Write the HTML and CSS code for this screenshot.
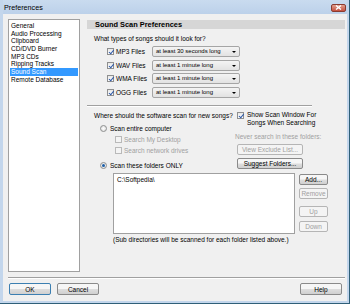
FILE: index.html
```html
<!DOCTYPE html>
<html>
<head>
    <title>Preferences</title>
    <link rel="stylesheet" href="styles.css">
</head>
<body>
    <div class="window">
        <div class="titlebar">
            <span class="title">Preferences</span>
            <div class="close">
                <svg width="7" height="5" viewBox="0 0 7 5"><path d="M1 0.5 L6 4.5 M6 0.5 L1 4.5" stroke="#fff" stroke-width="1.4"/></svg>
            </div>
        </div>
        <div class="dialog">
            <div class="main">
                <ul class="pages">
                    <li>General</li>
                    <li>Audio Processing</li>
                    <li>Clipboard</li>
                    <li>CD/DVD Burner</li>
                    <li>MP3 CDs</li>
                    <li>Ripping Tracks</li>
                    <li class="selected">Sound Scan</li>
                    <li>Remote Database</li>
                </ul>
                <div class="panel">
                    <div class="header">Sound Scan Preferences</div>
                    <div class="question">What types of songs should it look for?</div>
                    <div class="types">
                        <div class="type-row">
                            <label class="check"><span class="box on"></span>MP3 Files</label>
                            <div class="dropdown">at least 30 seconds long<span class="arrow"></span></div>
                        </div>
                        <div class="type-row">
                            <label class="check"><span class="box on"></span>WAV Files</label>
                            <div class="dropdown">at least 1 minute long<span class="arrow"></span></div>
                        </div>
                        <div class="type-row">
                            <label class="check"><span class="box on"></span>WMA Files</label>
                            <div class="dropdown">at least 1 minute long<span class="arrow"></span></div>
                        </div>
                        <div class="type-row">
                            <label class="check"><span class="box on"></span>OGG Files</label>
                            <div class="dropdown">at least 1 minute long<span class="arrow"></span></div>
                        </div>
                    </div>
                    <div class="rule"></div>
                    <div class="scan">
                        <div class="scan-left">
                            <div class="line">Where should the software scan for new songs?</div>
                            <label class="radio first"><span class="dot"></span>Scan entire computer</label>
                            <label class="check sub disabled"><span class="box"></span>Search My Desktop</label>
                            <label class="check sub disabled"><span class="box"></span>Search network drives</label>
                            <label class="radio second"><span class="dot on"></span>Scan these folders ONLY</label>
                        </div>
                        <div class="scan-right">
                            <label class="check two-line"><span class="box on"></span><span>Show Scan Window For<br>Songs When Searching</span></label>
                            <div class="never">Never search in these folders:</div>
                            <button class="btn wide" disabled>View Exclude List...</button>
                            <button class="btn wide">Suggest Folders...</button>
                        </div>
                    </div>
                    <div class="folders">
                        <div class="folder-list">C:\Softpedia\</div>
                        <div class="folder-buttons">
                            <button class="btn small add">Add...</button>
                            <button class="btn small remove" disabled>Remove</button>
                            <button class="btn small up" disabled>Up</button>
                            <button class="btn small down" disabled>Down</button>
                        </div>
                    </div>
                    <div class="note">(Sub directories will be scanned for each folder listed above.)</div>
                </div>
            </div>
            <div class="separator"></div>
            <div class="footer">
                <button class="btn foot default">OK</button>
                <button class="btn foot">Cancel</button>
                <span class="spacer"></span>
                <button class="btn foot">Help</button>
            </div>
        </div>
    </div>
</body>
</html>
```
FILE: styles.css
```css
* {
    box-sizing: border-box;
}
body {
    margin: 0;
    font-family: "Liberation Sans", Arial, sans-serif;
    font-size: 6.5px;
    color: #000;
}
.window {
    width: 350px;
    height: 304px;
    background: #c3d6ec;
    padding: 0 2px 2px 3px;
    border-right: 1px solid #2f5f78;
    border-bottom: 1px solid #2f5f78;
    display: flex;
    flex-direction: column;
}
.titlebar {
    height: 14px;
    display: flex;
    align-items: center;
    padding-left: 1px;
    background: linear-gradient(#c9dbef, #bcd1ea);
}
.title {
    font-size: 7.2px;
    flex: 1;
}
.close {
    width: 15px;
    height: 8px;
    margin-right: 1px;
    margin-top: 1px;
    border: 1px solid #8a3b30;
    border-radius: 2px;
    background: linear-gradient(#e2a08f, #c6503f);
    display: flex;
    align-items: center;
    justify-content: center;
}
.dialog {
    flex: 1;
    background: #f0f0f0;
    padding: 5px 2px 0 5px;
    display: flex;
    flex-direction: column;
}
.main {
    display: flex;
    align-items: flex-start;
    height: 253px;
}
.pages {
    list-style: none;
    margin: 0;
    padding: 2px 1px;
    width: 72px;
    height: 253px;
    background: #fff;
    border: 1px solid #a0a0a0;
}
.pages li {
    height: 7.7px;
    line-height: 7.7px;
    padding-left: 1px;
    white-space: nowrap;
}
.pages .selected {
    background: #3399ff;
    color: #fff;
}
.panel {
    margin-left: 7px;
    margin-top: 1px;
    width: 258px;
}
.header {
    height: 9px;
    line-height: 9px;
    padding-left: 8px;
    background: #d6d6d6;
    font-weight: bold;
    font-size: 7.4px;
}
.question {
    margin-top: 5px;
    line-height: 9px;
    padding-left: 7px;
}
.types {
    margin-top: 3px;
    display: flex;
    flex-direction: column;
    gap: 2.7px;
}
.type-row {
    display: flex;
    align-items: center;
    height: 11px;
    padding-left: 20px;
}
.type-row .check {
    width: 45px;
}
.check, .radio {
    display: flex;
    align-items: center;
    white-space: nowrap;
}
.box {
    width: 7px;
    height: 7px;
    margin-right: 2px;
    border: 1px solid #8e8f8f;
    background: linear-gradient(#e8e8e8, #fff);
    flex: none;
    position: relative;
}
.box.on::after {
    content: "";
    position: absolute;
    left: 1.5px;
    top: 0;
    width: 2px;
    height: 3.5px;
    border: solid #2b57a8;
    border-width: 0 1.2px 1.2px 0;
    transform: rotate(40deg);
}
.dropdown {
    position: relative;
    width: 88px;
    height: 11px;
    line-height: 9px;
    padding-left: 3px;
    border: 1px solid #a5a5a5;
    border-radius: 2px;
    background: linear-gradient(#f4f4f4, #e2e2e2);
    font-size: 6px;
    white-space: nowrap;
}
.arrow {
    position: absolute;
    right: 3px;
    top: 4px;
    border-left: 2px solid transparent;
    border-right: 2px solid transparent;
    border-top: 2px solid #000;
}
.rule {
    margin-top: 7px;
    width: 225px;
    border-top: 1px solid #a0a0a0;
    border-bottom: 1px solid #fff;
}
.scan {
    margin-top: 4px;
    display: flex;
}
.scan-left {
    width: 148px;
    padding-left: 7px;
    white-space: nowrap;
}
.line {
    line-height: 9px;
}
.radio {
    height: 8px;
}
.radio.first {
    margin-top: 4px;
    margin-left: 6px;
}
.radio.second {
    margin-top: 7px;
    margin-left: 6px;
}
.dot {
    width: 7px;
    height: 7px;
    margin-right: 3px;
    border-radius: 50%;
    border: 1px solid #8e8f8f;
    background: radial-gradient(#fff, #d8d8d8);
    position: relative;
}
.dot.on::after {
    content: "";
    position: absolute;
    left: 1px;
    top: 1px;
    width: 3px;
    height: 3px;
    border-radius: 50%;
    background: #1d5fa8;
}
.check.sub {
    height: 8px;
    margin-top: 3px;
    padding-left: 21px;
}
.disabled {
    color: #a0a0a0;
}
.disabled .box {
    border-color: #b9b9b9;
    background: #f4f4f4;
}
.scan-right {
    width: 90px;
    white-space: nowrap;
}
.two-line {
    align-items: flex-start;
    line-height: 8px;
    margin-left: 2px;
}
.two-line .box {
    margin-top: 0.5px;
    margin-right: 3px;
}
.never {
    margin-top: 6px;
    line-height: 8px;
    color: #a0a0a0;
}
.btn {
    display: block;
    font-family: inherit;
    font-size: 6.5px;
    padding: 0;
    color: #000;
    border: 1px solid #8a8a8a;
    border-radius: 2px;
    background: linear-gradient(#f6f6f6 45%, #dddddd 55%, #d0d0d0);
}
.btn:disabled {
    color: #a0a0a0;
    border-color: #b5b5b5;
    background: #f4f4f4;
}
.wide {
    width: 66px;
    height: 11px;
    margin: 3px 0 0 2px;
}
.folders {
    display: flex;
    margin-top: 4px;
    padding-left: 26px;
}
.folder-list {
    width: 182px;
    height: 61px;
    padding: 2px 3px;
    background: #fff;
    border: 1px solid #a0a0a0;
    line-height: 8px;
}
.folder-buttons {
    margin-left: 4px;
}
.small {
    width: 29px;
    height: 11px;
}
.add {
    margin-top: 1px;
}
.remove {
    margin-top: 3px;
}
.up {
    margin-top: 7px;
}
.down {
    margin-top: 4px;
}
.note {
    margin-top: 2px;
    padding-left: 26px;
    line-height: 8px;
}
.separator {
    margin-top: 5px;
    width: 337px;
    border-top: 1px solid #a0a0a0;
    border-bottom: 1px solid #fff;
}
.footer {
    margin-top: 4px;
    display: flex;
    padding-left: 1px;
    padding-right: 3px;
}
.foot {
    width: 42px;
    height: 12px;
    margin-right: 6px;
}
.foot:last-child {
    margin-right: 0;
}
.default {
    border-color: #3c7fb1;
}
.spacer {
    flex: 1;
}
```
